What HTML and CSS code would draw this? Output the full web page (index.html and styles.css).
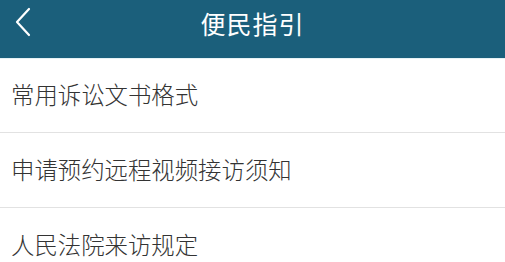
FILE: index.html
```html
<!DOCTYPE html>
<html lang="zh-CN">
<head>
<meta charset="utf-8">
<title>便民指引</title>
<link rel="stylesheet" href="styles.css">
</head>
<body>
<header class="bar">
  <span class="back">
    <svg width="18" height="30" viewBox="0 0 18 30"><polyline points="15,2 3,15 15,28" fill="none" stroke="#fff" stroke-width="2.2" stroke-linecap="round" stroke-linejoin="round"/></svg>
  </span>
  <h1 class="title">便民指引</h1>
</header>
<ul class="list">
  <li class="item">常用诉讼文书格式</li>
  <li class="item">申请预约远程视频接访须知</li>
  <li class="item">人民法院来访规定</li>
</ul>
</body>
</html>
```
FILE: styles.css
```css
html, body { margin: 0; padding: 0; background: #fff; }
body { font-family: "Noto Sans CJK SC", "Noto Sans", sans-serif; width: 505px; height: 262px; overflow: hidden; }
.bar { height: 58px; background: #1b5f7b; position: relative; display: flex; align-items: center; justify-content: center; box-shadow: 0 1px 0 #e6f2f5; }
.back { position: absolute; left: 14px; top: 7px; display: flex; }
.title { margin: 0; color: #fff; font-size: 25px; font-weight: 400; line-height: 1; margin-top: -12px; letter-spacing: 1px; }
.list { list-style: none; margin: 0; padding: 0; }
.item { height: 75px; display: flex; align-items: center; padding-left: 11px; padding-bottom: 2px; box-sizing: border-box; font-size: 23.4px; font-weight: 300; color: #333; border-bottom: 1px solid #e2e2e2; }
```
